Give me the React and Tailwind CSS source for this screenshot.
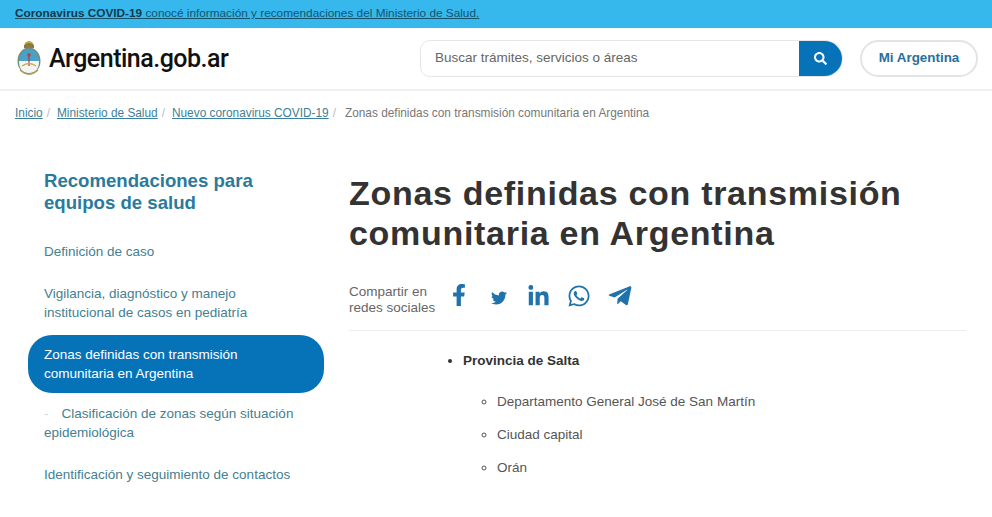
import React from 'react';
import { FaFacebookF, FaTwitter, FaLinkedinIn, FaWhatsapp, FaTelegramPlane, FaSearch } from 'react-icons/fa';

const CRUMBS = ['Inicio', 'Ministerio de Salud', 'Nuevo coronavirus COVID-19'];

const Shield = () => (
  <svg width="26" height="38" viewBox="0 0 26 38">
    <circle cx="13" cy="5.5" r="4.5" fill="#c9a94f" />
    <path d="M8 5 q5 -4 10 0 v3 h-10z" fill="#8b7a3a" />
    <ellipse cx="13" cy="21" rx="11.5" ry="13.5" fill="#6f8f7a" />
    <ellipse cx="13" cy="21" rx="10" ry="12" fill="#4ba0c8" />
    <path d="M3 21 h20 q0 12 -10 12 q-10 0 -10 -12z" fill="#f4f4f4" />
    <rect x="12.4" y="13" width="1.2" height="13" fill="#a3413d" />
    <circle cx="13" cy="15" r="1.8" fill="#b4443f" />
    <path d="M6 26 q7 -5 14 0" stroke="#c9a94f" strokeWidth="1.4" fill="none" />
    <path d="M4 30 q9 8 18 0" stroke="#b59a4a" strokeWidth="1.6" fill="none" />
  </svg>
);

const SideLink = ({ children, className = '' }) => (
  <a href="#" className={`block pl-4 text-[13.5px] leading-[19px] text-[#44808f] ${className}`}>{children}</a>
);

export default function App() {
  return (
    <div className="h-[517px] w-[992px] overflow-hidden bg-white font-['Liberation_Sans',sans-serif] text-[#333]">
      <div className="flex h-7 items-center bg-[#37b8ec] px-[15px] text-[11.8px]">
        <a href="#" className="text-[#14536f] underline">
          <strong className="text-[#12384a]">Coronavirus COVID-19</strong> conocé información y recomendaciones del Ministerio de Salud.
        </a>
      </div>

      <header className="flex h-[63px] items-center border-b-2 border-[#f0f0f0] pl-[16px] pr-[14px]">
        <Shield />
        <span className="ml-[7px] font-['Roboto',sans-serif] text-[25px] font-medium tracking-[-0.5px] text-[#111]">Argentina.gob.ar</span>
        <div className="ml-auto flex h-[37px] w-[423px] shrink-0 overflow-hidden rounded-l-[10px] rounded-r-[19px] border border-[#e6e6e6]">
          <div className="flex flex-1 items-center pl-[14px] text-[13.5px] text-[#666]">Buscar trámites, servicios o áreas</div>
          <button className="-my-px flex w-[43px] items-center justify-center bg-[#0672b8] text-white">
            <FaSearch size={13} />
          </button>
        </div>
        <a href="#" className="ml-[17px] flex h-[37px] w-[118px] shrink-0 items-center justify-center rounded-full border-2 border-[#e4e4e4] text-[13.4px] font-bold text-[#26709a]">Mi Argentina</a>
      </header>

      <nav className="flex h-[46px] items-center pl-[15px] text-[11.85px] text-[#777]">
        {CRUMBS.map((c) => (
          <React.Fragment key={c}>
            <a href="#" className="text-[#3d7f96] underline">{c}</a>
            <span className="ml-[4px] mr-[7px] text-[#bbb]">/</span>
          </React.Fragment>
        ))}
        <span className="ml-[2px]">Zonas definidas con transmisión comunitaria en Argentina</span>
      </nav>

      <div className="flex pl-[28px] pt-[33px]">
        <aside className="w-[296px]">
          <h2 className="pl-4 text-[18.6px] font-bold leading-[22px] text-[#2a7a9e]">Recomendaciones para<br />equipos de salud</h2>
          <SideLink className="mt-[28px]">Definición de caso</SideLink>
          <SideLink className="mt-[23px]">Vigilancia, diagnóstico y manejo<br />institucional de casos en pediatría</SideLink>
          <a href="#" className="mt-[13px] block rounded-[24px] bg-[#0672b8] py-[10px] pl-4 text-[13.5px] leading-[19px] text-white">Zonas definidas con transmisión<br />comunitaria en Argentina</a>
          <SideLink className="mt-[11px]"><span className="text-[#d5d5d5]">-</span><span className="ml-[13px]">Clasificación de zonas según situación</span><br />epidemiológica</SideLink>
          <SideLink className="mt-[23px]">Identificación y seguimiento de contactos</SideLink>
        </aside>

        <main className="ml-[25px] w-[617px]">
          <h1 className="mt-[3px] text-[34px] font-bold leading-[40px] tracking-[0.7px] text-[#333]">Zonas definidas con transmisión<br />comunitaria en Argentina</h1>
          <div className="mt-[22px] flex h-[56px] items-start border-b border-[#eeeeee] pt-[9px]">
            <p className="w-[99px] text-[13.5px] leading-[16px] text-[#666]">Compartir en<br />redes sociales</p>
            <div className="-mt-px flex items-center text-[#1f72ab]">
              <FaFacebookF size={22} className="-mt-[3px]" />
              <FaTwitter size={16} className="ml-[21px] mt-[3px]" />
              <FaLinkedinIn size={23} className="ml-[20px]" />
              <FaWhatsapp size={24} className="ml-[17px]" />
              <FaTelegramPlane size={26} className="ml-[16px]" />
            </div>
          </div>
          <ul className="ml-[114px] mt-[21px] list-disc text-[13.5px]">
            <li className="font-bold leading-[18px] text-[#333]">Provincia de Salta
              <ul className="ml-[34px] mt-[23px] list-[circle] font-normal text-[#555]">
                <li className="leading-[18px]">Departamento General José de San Martín</li>
                <li className="mt-[15px] leading-[18px]">Ciudad capital</li>
                <li className="mt-[15px] leading-[18px]">Orán</li>
              </ul>
            </li>
          </ul>
        </main>
      </div>
    </div>
  );
}
